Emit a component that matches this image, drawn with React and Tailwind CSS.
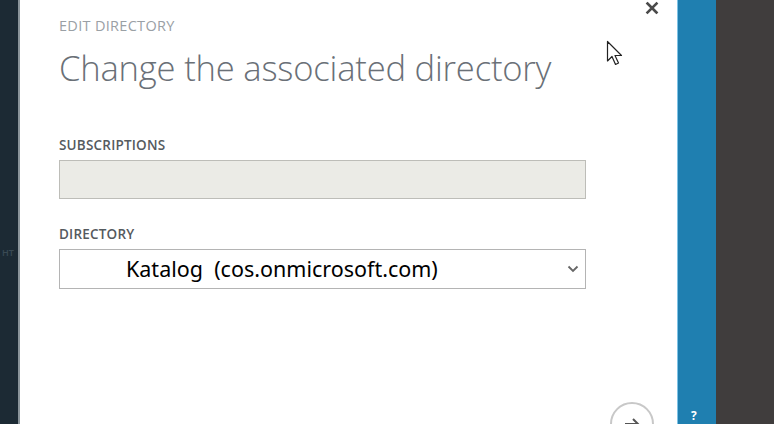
import React from 'react';

function Cursor() {
  return (
    <svg className="absolute left-[586px] top-[40px]" width="20" height="28" viewBox="0 0 20 28">
      <path d="M1.5 1.5 L1.5 21 L6 16.5 L9.5 24.5 L12.5 23 L9 15.5 L15.5 15.5 Z" fill="#fff" stroke="#222" strokeWidth="1.2" strokeLinejoin="round" />
    </svg>
  );
}

export default function App() {
  return (
    <div className="flex h-[424px] w-[774px] overflow-hidden bg-white" style={{ fontFamily: '"Open Sans", "Liberation Sans", sans-serif' }}>
      <div className="relative w-[18px] shrink-0 bg-[#1c2a34]">
        <span className="absolute left-[2px] top-[248px] text-[9px] font-semibold leading-none text-[#3a4a54]">HT</span>
      </div>
      <div className="w-[2px] shrink-0 bg-[#8a949a]" />

      <div className="relative flex-1 pl-[39px] pt-[16px]">
        <button className="absolute right-[18px] top-[1px] text-[#555]">
          <svg width="14" height="14" viewBox="0 0 14 14">
            <path d="M2.5 2.5 L11.5 11.5 M11.5 2.5 L2.5 11.5" stroke="#4a4a4a" strokeWidth="2.6" strokeLinecap="square" />
          </svg>
        </button>
        <Cursor />

        <div className="text-[14.5px] uppercase leading-5 tracking-[0.3px] text-[#9aa0a5]">Edit Directory</div>
        <h1 className="mt-[10px] text-[34.6px] font-light leading-[44px] tracking-[-0.2px] text-[#6a7077]">
          Change the associated directory
        </h1>

        <div className="mt-[45px] text-[13.5px] font-semibold uppercase leading-5 tracking-[0.2px] text-[#555a5e]">Subscriptions</div>
        <div className="mt-[5px] h-[39px] w-[527px] border border-[#bdbdb8] bg-[#ebebe6]" />

        <div className="mt-[25px] text-[13.5px] font-semibold uppercase leading-5 tracking-[0.2px] text-[#555a5e]">Directory</div>
        <div className="mt-[5px] flex h-[40px] w-[527px] items-center border border-[#b4b4b4] bg-white pl-[66px] pr-[6px]">
          <span className="flex-1 text-[21.5px] leading-6 text-black" style={{ fontFamily: '"Noto Sans", "Open Sans", sans-serif' }}>
            Katalog&nbsp; (cos.onmicrosoft.com)
          </span>
          <svg width="12" height="8" viewBox="0 0 12 8">
            <path d="M1.5 1.5 L6 6 L10.5 1.5" fill="none" stroke="#666" strokeWidth="1.8" />
          </svg>
        </div>

        <div className="absolute left-[590px] top-[402px] flex h-[44px] w-[44px] items-center justify-center rounded-full border-2 border-[#c8c8c8]">
          <svg width="18" height="14" viewBox="0 0 18 14">
            <path d="M2 7 H15 M10 2 L15 7 L10 12" fill="none" stroke="#555" strokeWidth="2" />
          </svg>
        </div>
      </div>

      <div className="relative w-[39px] shrink-0 border-l border-[#7ec3e6] bg-[#1f7fb0]">
        <span className="absolute left-[13px] top-[410px] text-[12px] font-bold leading-none text-white">?</span>
      </div>
      <div className="w-[58px] shrink-0 bg-[#403d3d]" />
    </div>
  );
}
